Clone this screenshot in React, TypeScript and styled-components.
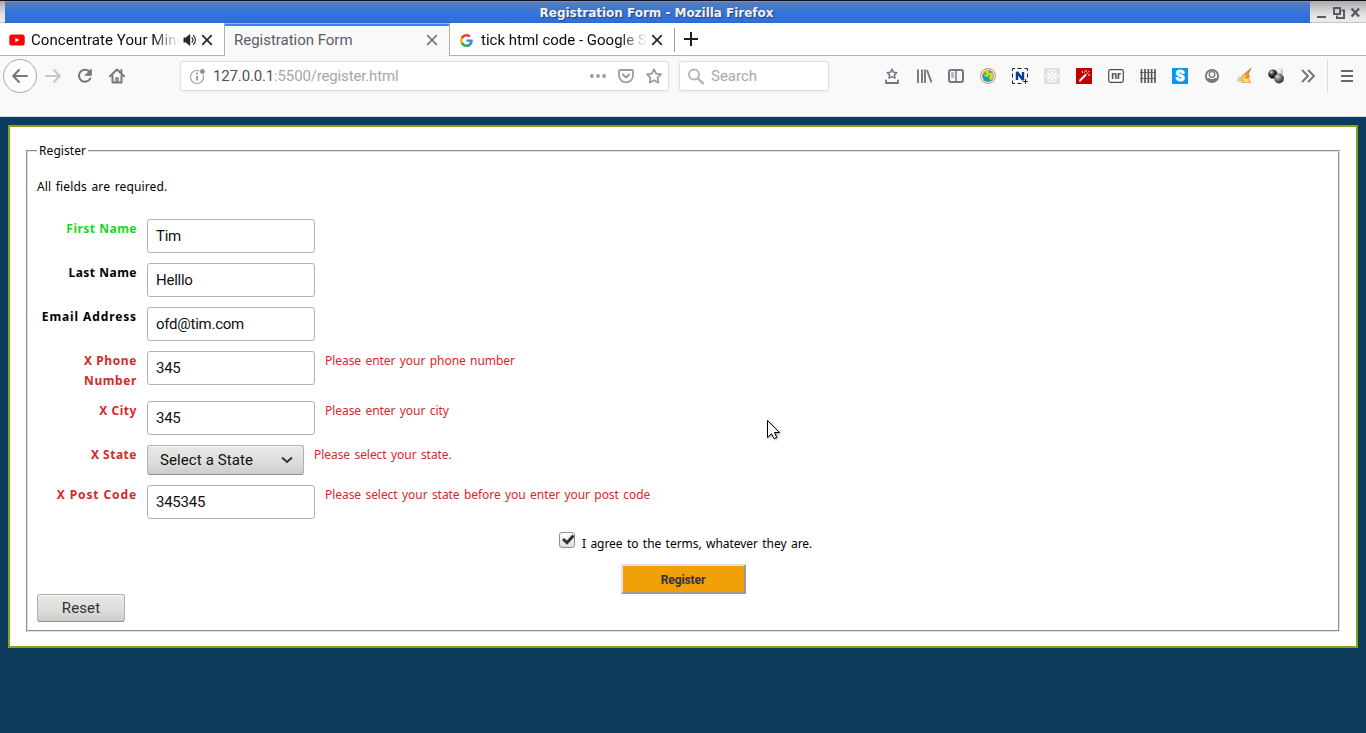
import React from "react";
import styled, { createGlobalStyle, css } from "styled-components";

const GlobalStyle = createGlobalStyle`
  * { box-sizing: border-box; }
  body { margin: 0; background: #0e3d5b; overflow: hidden; }
  button, input { font: inherit; margin: 0; }
`;

const ui = `Roboto, "Liberation Sans", sans-serif`;
const pageFont = `"Noto Sans", "Open Sans", sans-serif`;

const Window = styled.div`
  position: relative;
  width: 1366px;
  height: 733px;
  display: flex;
  flex-direction: column;
  font-family: ${ui};
  font-size: 15px;
  background: #0e3d5b;
`;

/* ---- window frame ---- */
const TitleBar = styled.header`
  height: 23px;
  flex: none;
  display: flex;
  border-top: 1px solid #11101c;
  background: linear-gradient(#aaaaac, #e2e2e2 60%, #ececec);
  box-shadow: inset 0 -1px 0 #c4c4c4;
`;
const TitleFill = styled.div`
  margin-left: 5px;
  width: 1305px;
  padding: 1px 2px 0 0;
  display: flex;
  justify-content: center;
  background: linear-gradient(#8fa4cc 0, #597db9 1px, #3f77cc 8px, #3273e0 13px, #306fdb 21px, #2563c4 22px);
  color: #f2f2f2;
  font: bold 12px/22px "DejaVu Sans", sans-serif;
  letter-spacing: -0.03px;
  text-shadow: 1px 1px 1px #23437e;
`;
const WindowButtons = styled.div`
  flex: 1;
  display: flex;
  align-items: center;
  justify-content: flex-end;
  padding: 2px 6px 0 0;
`;

/* ---- tabs ---- */
const TabStrip = styled.nav`
  height: 33px;
  flex: none;
  display: flex;
  background: linear-gradient(#b1b1b3, #b1b1b3) 0 100% / 100% 1px no-repeat #fff;
`;
const TabBox = styled.div<{ $active?: boolean }>`
  width: 225px;
  display: flex;
  align-items: center;
  padding: 1px 0 0 9px;
  color: #0c0c0d;
  border-right: 1px solid #b1b1b3;
  ${(p) =>
    p.$active &&
    css`
      color: #5b5b66;
      background: #f9f9fa;
      border-top: 1px solid #b1b1b3;
      box-shadow: inset 0 2px 0 #3b7ff0;
      padding-top: 0;
    `}
`;
const LastTab = styled(TabBox)`
  padding-left: 10px;
  border-right: 0;
  background: linear-gradient(#a0a0a3, #a0a0a3) 100% 5px / 1px 24px no-repeat;
`;
const TabTitle = styled.span<{ $left: number; $width: number; $fade?: boolean; $spacing?: number }>`
  margin-left: ${(p) => p.$left}px;
  width: ${(p) => p.$width}px;
  line-height: 20px;
  white-space: nowrap;
  overflow: hidden;
  letter-spacing: ${(p) => p.$spacing ?? 0}px;
  ${(p) => p.$fade && css`mask-image: linear-gradient(to left, transparent, #000 28px);`}
`;
const TabIcon = styled.span<{ $left: number; $width: number }>`
  margin-left: ${(p) => p.$left}px;
  width: ${(p) => p.$width}px;
  display: flex;
`;
const NewTab = styled.div`
  padding: 8px 0 0 9px;
`;

/* ---- toolbar ---- */
const Toolbar = styled.div`
  height: 61px;
  flex: none;
  display: flex;
  align-items: flex-start;
  padding-top: 2px;
  background: #f9f9fa;
  border-bottom: 1px solid #dcdcde;
  color: #737780;
`;
const BackButton = styled.div`
  width: 34px;
  height: 34px;
  margin: 1px 0 0 3px;
  display: grid;
  place-items: center;
  border: 1px solid #a9a9ab;
  border-radius: 50%;
  background: #fcfcfd;
`;
const NavCell = styled.div<{ $dim?: boolean }>`
  width: 32px;
  height: 36px;
  display: grid;
  place-items: center;
  color: ${(p) => (p.$dim ? "#c5c6ca" : "inherit")};
`;
const Field = styled.div<{ $width: number; $left: number }>`
  margin: 3px 0 0 ${(p) => p.$left}px;
  width: ${(p) => p.$width}px;
  height: 30px;
  display: flex;
  align-items: center;
  padding: 0 6px 0 8px;
  border: 1px solid #dfdfe1;
  border-radius: 3px;
  background: #fff;
  box-shadow: 0 1px 3px rgba(0, 0, 0, 0.06);
  color: #9b9ca3;
`;
const Url = styled.span`
  flex: 1;
  margin-left: 7px;
  color: #a5a6ac;
  letter-spacing: -0.15px;
  b { font-weight: 400; color: #50515c; }
`;
const Actions = styled.div`
  display: flex;
  gap: 12px;
`;
const Placeholder = styled.span`
  margin-left: 6px;
  color: #a7a8ad;
`;
const Addons = styled.div`
  margin-left: 47px;
  display: flex;
`;
const MenuCell = styled.div`
  width: 39px;
  height: 34px;
  margin: 1px 0 0 3px;
  display: grid;
  place-items: center;
  border-left: 1px solid #dbdbdd;
`;

/* ---- form ---- */
const Page = styled.main`
  flex: 1;
  padding: 8px;
  font: 12px/20px ${pageFont};
  color: #000;
`;
const Form = styled.form`
  height: 523px;
  padding: 15px 16px 14px;
  border: 2px solid #83a31b;
  background: #fff;
`;
const Fieldset = styled.fieldset`
  height: 490px;
  margin: 0;
  padding: 0 9px;
  border: 2px groove #e3e3e3;
`;
const Legend = styled.legend`
  height: 18px;
  line-height: 18px;
  padding: 0 2px;
  letter-spacing: 0.08px;
`;
const Intro = styled.p`
  margin: 17px 0 22px;
  letter-spacing: 0.14px;
  word-spacing: 1.3px;
`;
const Rows = styled.div`
  display: flex;
  flex-direction: column;
  gap: 10px;
`;
const Row = styled.div<{ $color: string }>`
  display: flex;
  align-items: flex-start;
  gap: 10px;
  color: ${(p) => p.$color};
`;
const Label = styled.label<{ $spacing: number }>`
  width: 100px;
  text-align: right;
  font-weight: 700;
  letter-spacing: ${(p) => p.$spacing}px;
`;
const Input = styled.input`
  width: 168px;
  height: 34px;
  padding: 0 8px;
  border: 1px solid #b2b2b0;
  border-radius: 3px;
  outline: 0;
  background: #fff;
  color: #101010;
  font: 15px ${ui};
  letter-spacing: -0.25px;
`;
const raised = css`
  border: 1px solid #b0b0ad;
  border-bottom-color: #8c8c88;
  border-radius: 3px;
  background: linear-gradient(#e9e9e8, #dcdcdb 60%, #cdcdcb);
  box-shadow: inset 0 1px 0 #f8f8f8;
`;
const Select = styled.div`
  ${raised}
  width: 157px;
  height: 30px;
  display: flex;
  align-items: center;
  justify-content: space-between;
  padding: 0 10px 0 12px;
  color: #111;
  font: 15px ${ui};
  letter-spacing: 0.1px;
`;
const Message = styled.span`
  letter-spacing: -0.05px;
  word-spacing: 1.3px;
  white-space: nowrap;
`;
const Terms = styled.div`
  display: flex;
  height: 32px;
  margin: 13px 0 0 522px;
  gap: 7px;
`;
const Check = styled.span`
  width: 16px;
  height: 16px;
  display: grid;
  border: 1px solid #8e8e8e;
  border-radius: 3px;
  background: linear-gradient(#fff, #dedede);
`;
const TermsText = styled.span`
  padding-top: 2px;
  letter-spacing: -0.04px;
  word-spacing: 1.3px;
`;
const Submit = styled.button`
  display: block;
  width: 125px;
  height: 30px;
  margin-left: 584px;
  padding: 2px 1px 0 0;
  border: 2px solid;
  border-color: #e3e3e3 #9a9a9a #9a9a9a #e3e3e3;
  background: #f2a007;
  color: #2e3436;
  font: bold 12px ${ui};
  letter-spacing: -0.08px;
`;
const Reset = styled.button`
  ${raised}
  display: block;
  width: 88px;
  height: 28px;
  padding: 0;
  color: #2e3436;
  font: 15px ${ui};
  letter-spacing: 0.1px;
`;
const Pointer = styled.svg`
  position: absolute;
  left: 766px;
  top: 419px;
  filter: drop-shadow(1px 1px 1px rgba(0, 0, 0, 0.35));
`;

const Icon = ({ children, size = 16 }: { children: React.ReactNode; size?: number }) => (
  <svg width={size} height={size} viewBox={`0 0 ${size} ${size}`} fill="none" stroke="currentColor" strokeWidth="2" strokeLinecap="round" strokeLinejoin="round">
    {children}
  </svg>
);

const Close = ({ color = "#2a2a2e" }: { color?: string }) => (
  <svg width="12" height="12" viewBox="0 0 12 12" stroke={color} strokeWidth="1.7" strokeLinecap="round">
    <path d="M1.7 1.7l8.6 8.6M10.3 1.7l-8.6 8.6" />
  </svg>
);

const YouTube = () => (
  <svg width="16" height="12" viewBox="0 0 16 12">
    <rect x=".3" y=".5" width="15.4" height="11" rx="2.6" fill="#f00" />
    <path d="M6.3 3.7v4.6L10.3 6z" fill="#fff" />
  </svg>
);

const Speaker = () => (
  <svg width="14" height="14" viewBox="0 0 14 14" fill="none" stroke="#2a2a2e" strokeLinecap="round">
    <path d="M.5 5.1c0-.4.3-.6.6-.6H3l3.3-3c.4-.3.9-.1.9.4v10.2c0 .5-.5.7-.9.4L3 9.5H1.1c-.3 0-.6-.2-.6-.6z" fill="#2a2a2e" stroke="none" />
    <path d="M9 4.7c1.2 1.3 1.2 3.3 0 4.6M10.4 2.5c2.7 2.3 2.7 6.7 0 9" strokeWidth="1.1" />
  </svg>
);

const Google = () => (
  <svg width="13" height="13" viewBox="0 0 48 48">
    <path fill="#EA4335" d="M24 9.5c3.54 0 6.71 1.22 9.21 3.6l6.85-6.85C35.9 2.38 30.47 0 24 0 14.62 0 6.51 5.38 2.56 13.22l7.98 6.19C12.43 13.72 17.74 9.5 24 9.5z" />
    <path fill="#4285F4" d="M46.98 24.55c0-1.57-.15-3.09-.38-4.55H24v9.02h12.94c-.58 2.96-2.26 5.48-4.78 7.18l7.73 6c4.51-4.18 7.09-10.36 7.09-17.65z" />
    <path fill="#FBBC05" d="M10.53 28.59c-.48-1.45-.76-2.99-.76-4.59s.27-3.14.76-4.59l-7.98-6.19C.92 16.46 0 20.12 0 24s.92 7.54 2.56 10.78l7.97-6.19z" />
    <path fill="#34A853" d="M24 48c6.48 0 11.93-2.13 15.89-5.81l-7.73-6c-2.15 1.45-4.92 2.3-8.16 2.3-6.26 0-11.57-4.22-13.47-9.91l-7.98 6.19C6.51 42.62 14.62 48 24 48z" />
  </svg>
);

const starPath = "M8 1.2l2.1 4.5 4.9.6-3.5 3.4.9 5L8 12.3l-4.4 2.4.9-5L1 6.3l4.900-.6z";

const addons: React.ReactNode[] = [
  <Icon>
    <path d="M8 1.200l1.500 3 3.200.4-2.300 2.300.6 3.200L8 8.600l-3 1.500.6-3.200-2.300-2.300 3.200-.4z" strokeWidth="1.500" />
    <path d="M2 12.500V15h12v-2.500" />
  </Icon>,
  <Icon>
    <path d="M2 1.500V15M6 1.500V15M9 1.500V15M11 2l4.500 12.500" strokeLinecap="butt" strokeWidth="1.900" />
  </Icon>,
  <Icon>
    <rect x="1" y="2" width="14" height="12" rx="2" />
    <path d="M8 2v12" strokeWidth="1.500" />
    <path d="M3.500 5h2.200M3.500 7h2.200M3.500 9h2" strokeWidth="1" />
  </Icon>,
  <Icon>
    <circle cx="8" cy="8" r="7.400" fill="#fff" stroke="#f78768" strokeWidth="1.100" />
    <circle cx="8" cy="8" r="5.900" fill="#18a0b4" stroke="none" />
    <path d="M3 5.500C4 3 7 2 9 2.400l-.5 2L10 5l2-.5 1.600 2.700-1.600 4-1.600 1L9 9.600 7 8.400 5.600 8.800z" fill="#dbdc20" stroke="none" />
    <path d="M4.500 4l2.500 1.400-1 1.300-2-.3zM8.300 6.500l1.700 1-.5 2-1.500-1.200z" fill="#489d43" stroke="none" />
  </Icon>,
  <Icon>
    <path d="M.5 3V.5H3M5.500.5h4M12.500.5h3V3M15.500 5.500v4M.5 5.500v4M.5 12.500v3H3M5.500 15.500h4" stroke="#222" strokeWidth="1" strokeLinecap="butt" />
    <path d="M5 12V4l6 8V4" stroke="#0b3f8f" strokeWidth="2.400" strokeLinecap="butt" strokeLinejoin="bevel" />
    <path d="M11.500 13.500h4M13.500 11.500v4" stroke="#222" strokeWidth="1" />
  </Icon>,
  <Icon>
    <path d="M0 0h16v16H0z" fill="#dedede" stroke="none" />
    <g stroke="#fff" strokeWidth=".9">
      <ellipse cx="8" cy="8" rx="6.600" ry="2.500" />
      <ellipse cx="8" cy="8" rx="6.600" ry="2.500" transform="rotate(60 8 8)" />
      <ellipse cx="8" cy="8" rx="6.600" ry="2.500" transform="rotate(120 8 8)" />
    </g>
    <circle cx="8" cy="8" r="1.300" fill="#fff" stroke="none" />
  </Icon>,
  <Icon>
    <path d="M0 0h16v16H0z" fill="#c20000" stroke="none" />
    <path d="M4 12.500l5.500-5.500" stroke="#fff" strokeWidth="2" />
    <path d="M10.800 5.700l1-1M6.500 3.500v1M8.500 4.200h.1M10 2.500v1M13 6.500v1M12.800 3.300h.1" stroke="#fff" strokeWidth="1" />
  </Icon>,
  <Icon>
    <rect x=".7" y="1.700" width="14.600" height="12.600" rx="1.800" fill="#fff" stroke="#4b4b4b" strokeWidth="1.200" />
    <text x="8" y="10.500" textAnchor="middle" fontFamily="Roboto, sans-serif" fontWeight="700" fontSize="10.500" fill="#4b4b4b" stroke="none">nr</text>
  </Icon>,
  <Icon>
    <path d="M0 4.500h16M0 10.500h16" stroke="#777" strokeWidth="1.200" strokeLinecap="butt" />
    <path d="M1.500 1v14M5 1v14M8.300 1v14M11.600 1v14M15 1v14" stroke="#5a5a5a" strokeWidth="1.700" strokeLinecap="butt" />
  </Icon>,
  <Icon>
    <path d="M0 0h16v16H0z" fill="#0495f8" stroke="none" />
    <text x="8" y="13.200" textAnchor="middle" fontFamily="Roboto, sans-serif" fontWeight="900" fontSize="14.500" fill="#fff" stroke="#fff" strokeWidth=".9">S</text>
  </Icon>,
  <Icon>
    <circle cx="8" cy="8" r="6.100" strokeWidth="1.900" />
    <circle cx="8" cy="6.500" r="2.800" strokeWidth="1.300" />
    <path d="M3 10.300c1.200-.5 2-.4 3 .2 1.300.7 2.700.7 4 0 1-.6 1.800-.7 3-.2C12 13 10 14.200 8 14.200S4 13 3 10.300z" fill="currentColor" stroke="none" />
  </Icon>,
  <Icon>
    <path d="M.5 14.500c.5-4 1.500-6 3.500-6.500l2 5z" fill="#c8dcc8" stroke="none" />
    <path d="M14.800.5L12 6.400l-3-.6z" fill="#c98812" stroke="#b97614" strokeWidth=".7" />
    <path d="M6.500 7l3.500-2.500 3.500 2.500-.5 4.500 2 3H6L4 12z" fill="#f7c34c" stroke="#e2a033" strokeWidth=".7" />
    <path d="M9.500 6.300l3.200 1.500M10 9.300h2" stroke="#d94b37" strokeWidth="1" />
    <path d="M7.500 11.500l4 .5M8 13.500h4" stroke="#fff0a5" strokeWidth="1" />
  </Icon>,
  <svg width="16" height="16" viewBox="0 0 16 16">
    <defs>
      <radialGradient id="ballDark" cx=".35" cy=".3" r=".7"><stop stopColor="#ddd" /><stop offset=".4" stopColor="#444" /><stop offset="1" stopColor="#000" /></radialGradient>
      <radialGradient id="ballLight" cx=".35" cy=".35" r=".7"><stop stopColor="#fff" /><stop offset="1" stopColor="#bbb" /></radialGradient>
      <radialGradient id="ballGrey" cx=".35" cy=".3" r=".7"><stop stopColor="#ddd" /><stop offset=".5" stopColor="#777" /><stop offset="1" stopColor="#333" /></radialGradient>
    </defs>
    <circle cx="11.500" cy="4" r="3.700" fill="url(#ballLight)" />
    <circle cx="4.800" cy="6" r="4.600" fill="url(#ballDark)" />
    <circle cx="11" cy="10.500" r="4.900" fill="url(#ballGrey)" />
  </svg>,
  <Icon>
    <path d="M2.500 2.500L8 8l-5.500 5.500M8.500 2.500L14 8l-5.500 5.500" />
  </Icon>,
];

const RED = "#d6282c";
type RowData = { label: string; value: string; color: string; labelSpacing: number; message?: string; select?: boolean };
const rows: RowData[] = [
  { label: "First Name", value: "Tim", color: "#16d91f", labelSpacing: 0.5 },
  { label: "Last Name", value: "Helllo", color: "#000", labelSpacing: 0.5 },
  { label: "Email Address", value: "ofd@tim.com", color: "#000", labelSpacing: 0.88 },
  { label: "X Phone Number", value: "345", color: RED, labelSpacing: 0.6, message: "Please enter your phone number" },
  { label: "X City", value: "345", color: RED, labelSpacing: 0.55, message: "Please enter your city" },
  { label: "X State", value: "Select a State", color: RED, labelSpacing: 0.5, message: "Please select your state.", select: true },
  { label: "X Post Code", value: "345345", color: RED, labelSpacing: 0.9, message: "Please select your state before you enter your post code" },
];

export default function App() {
  return (
    <Window>
      <GlobalStyle />
      <TitleBar>
        <TitleFill>Registration Form - Mozilla Firefox</TitleFill>
        <WindowButtons>
          <svg width="44" height="14" viewBox="0 0 44 14" fill="none" stroke="#555a66" strokeWidth="2">
            <path d="M1 11h9" />
            <path d="M18 2h6v6h-6z" />
            <path d="M25.500 4.500H28V12h-7V9.500" />
            <path d="M35.500 2.500l7.500 8M43 2.500l-7.500 8" strokeWidth="2.400" />
          </svg>
        </WindowButtons>
      </TitleBar>

      <TabStrip>
        <TabBox>
          <YouTube />
          <TabTitle $left={6} $width={149} $fade $spacing={0.06}>Concentrate Your Mind</TabTitle>
          <TabIcon $left={3} $width={18}><Speaker /></TabIcon>
          <Close />
        </TabBox>
        <TabBox $active>
          <TabTitle $left={0} $width={192} $spacing={-0.02}>Registration Form</TabTitle>
          <Close color="#75767f" />
        </TabBox>
        <LastTab>
          <Google />
          <TabTitle $left={8} $width={166} $fade>tick html code - Google Search</TabTitle>
          <TabIcon $left={4} $width={12}><Close /></TabIcon>
        </LastTab>
        <NewTab>
          <svg width="14" height="16" viewBox="0 0 14 16" stroke="#1c1c1f" strokeWidth="2"><path d="M0 8h14M7 1v14" /></svg>
        </NewTab>
      </TabStrip>

      <Toolbar>
        <BackButton>
          <Icon><path d="M15 8H1.500M7 2L1.200 8 7 14" /></Icon>
        </BackButton>
        <NavCell $dim><Icon><path d="M1 8h13.500M9 2l5.800 6L9 14" /></Icon></NavCell>
        <NavCell>
          <Icon>
            <path d="M13.300 10.500A6 6 0 1 1 12.800 4.200" />
            <path d="M14.300 1.500v5.800H8.500z" fill="currentColor" strokeWidth="1" />
          </Icon>
        </NavCell>
        <NavCell>
          <Icon>
            <path d="M1 8.300L8 1.500l7 6.800" />
            <path d="M3.500 8v6.500h9V8M12.300 2v3" />
            <path d="M7 14v-4h2v4" strokeWidth="1.500" />
          </Icon>
        </NavCell>
        <Field $left={47} $width={489}>
          <Icon size={17}>
            <circle cx="8" cy="9" r="6.500" strokeWidth="1.100" />
            <path d="M8 8v4.500" strokeLinecap="butt" />
            <circle cx="8" cy="5.600" r="1.100" fill="currentColor" stroke="none" />
            <circle cx="13.500" cy="3.500" r="3" fill="#8f9097" stroke="#fff" strokeWidth="1" />
          </Icon>
          <Url><b>127.0.0.1</b>:5500/register.html</Url>
          <Actions>
            <Icon>
              <g fill="currentColor" stroke="none"><circle cx="1.900" cy="8" r="1.900" /><circle cx="8" cy="8" r="1.900" /><circle cx="14.100" cy="8" r="1.900" /></g>
            </Icon>
            <Icon>
              <path d="M2 2h12a1 1 0 0 1 1 1v4.500a7 6.800 0 0 1-14 0V3a1 1 0 0 1 1-1z" strokeWidth="1.800" />
              <path d="M4.800 6.500L8 9.500l3.200-3" />
            </Icon>
            <Icon><path d={starPath} strokeWidth="1.700" /></Icon>
          </Actions>
        </Field>
        <Field $left={10} $width={150}>
          <Icon size={17}>
            <g stroke="#b5b5b9"><circle cx="6" cy="6.500" r="5" /><path d="M9.800 10.300l5.200 5" strokeWidth="2.400" /></g>
          </Icon>
          <Placeholder>Search</Placeholder>
        </Field>
        <Addons>
          {addons.map((icon, i) => (
            <NavCell key={i}>{icon}</NavCell>
          ))}
        </Addons>
        <MenuCell>
          <svg width="12" height="12" viewBox="0 0 12 12" stroke="#65666f" strokeWidth="2"><path d="M0 1h12M0 6h12M0 11h12" /></svg>
        </MenuCell>
      </Toolbar>

      <Page>
        <Form onSubmit={(e) => e.preventDefault()}>
          <Fieldset>
            <Legend>Register</Legend>
            <Intro>All fields are required.</Intro>
            <Rows>
              {rows.map((r) => (
                <Row key={r.label} $color={r.color}>
                  <Label $spacing={r.labelSpacing}>{r.label}</Label>
                  {r.select ? (
                    <Select>
                      {r.value}
                      <svg width="12" height="8" viewBox="0 0 12 8" fill="none" stroke="#2e3436" strokeWidth="2"><path d="M1 1.500l5 4.500 5-4.500" /></svg>
                    </Select>
                  ) : (
                    <Input defaultValue={r.value} />
                  )}
                  {r.message && <Message>{r.message}</Message>}
                </Row>
              ))}
            </Rows>
            <Terms>
              <Check>
                <svg width="14" height="14" viewBox="0 0 14 14" fill="none" stroke="#2e3436" strokeWidth="3"><path d="M3 6l4 3.700 6.500-7.200" /></svg>
              </Check>
              <TermsText>I agree to the terms, whatever they are.</TermsText>
            </Terms>
            <Submit>Register</Submit>
            <Reset type="reset">Reset</Reset>
          </Fieldset>
        </Form>
      </Page>

      <Pointer width="16" height="22" viewBox="0 0 16 22">
        <path d="M1.500 1.500v17l4-3.800 2.600 5 2.700-1.300-2.300-4.900h5z" fill="#fff" stroke="#000" />
      </Pointer>
    </Window>
  );
}
